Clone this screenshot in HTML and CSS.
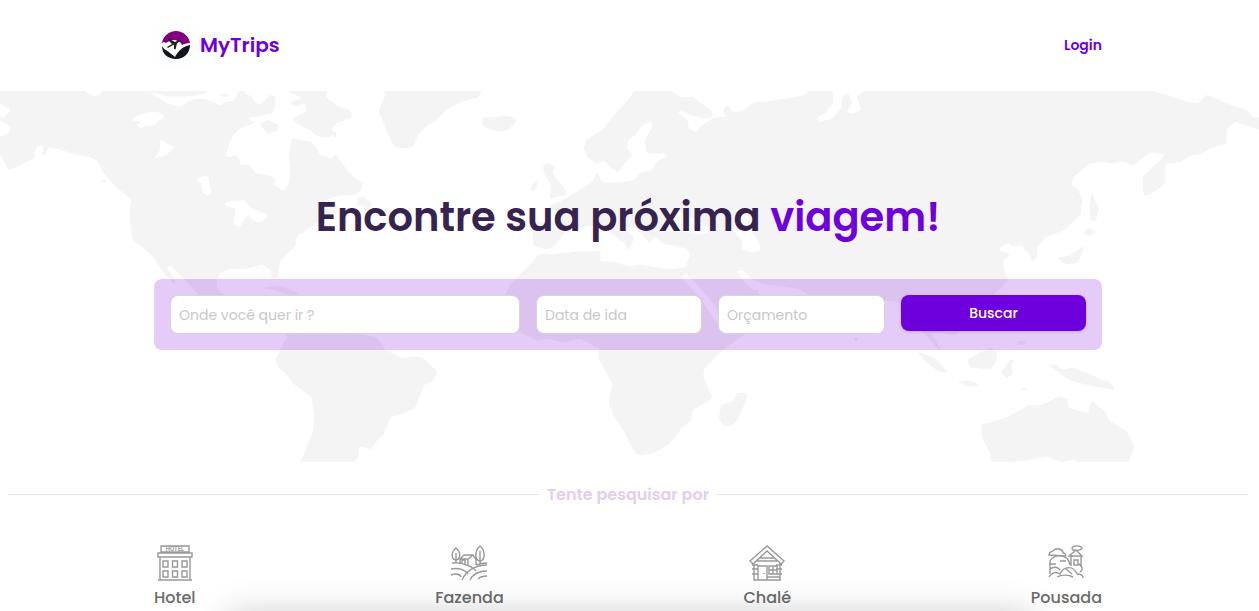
FILE: index.html
```html
<!DOCTYPE html>
<html lang="pt-BR">
<head>
<meta charset="utf-8">
<title>MyTrips</title>
<link rel="stylesheet" href="styles.css">
</head>
<body>
<div class="page">
<header class="header">
  <a class="brand">
    <svg class="logo" viewBox="0 0 44 44">
      <path d="M0 0h44v44H0z" fill="#fdfefe"/>
      <circle cx="22" cy="22" r="14" fill="#fff"/>
      <path d="M8 20C9 13 15 8 22 8s13 5 14 12c-4 0-6 1-8 2l-2-3-5-2-4 0-5 3-2-1z" fill="#800080"/>
      <path d="M8 23c2 4 5 4 8 7l5 4c4-7 7-10 15-12 0 8-6 14-14 14S8 31 8 23z" fill="#15151f"/>
      <path d="M13 24l5-3-4-4 1.500-1 5.500 3 5-2.500.8 1L23 20.500l-1.500 6-1.500-.5v-4.500L14 25z" fill="#222"/>
    </svg>
    <span class="name">MyTrips</span>
  </a>
  <a class="login">Login</a>
</header>
<main>
<section class="hero">
  <svg class="map" viewBox="0 91 1259 371" fill="#f4f4f4" stroke-linejoin="round">
    <filter id="smooth" filterUnits="userSpaceOnUse" x="0" y="91" width="1259" height="371" color-interpolation-filters="sRGB"><feGaussianBlur stdDeviation="1.2"/><feComponentTransfer><feFuncA type="linear" slope="3" intercept="-1"/></feComponentTransfer></filter>
    <g filter="url(#smooth)">
    <g stroke="#f4f4f4" stroke-width="1">
    <path d="M-9 81H83V91L90 95 95 97 100 95 104 91V81H128V91L140 93 152 95 160 99 165 103 172 105 180 107.500 188 102 196 99 205 99.500 214 103 220 106 224 103 234 101 238 94 240 91V81H243V91L247 95 252 97 255 103 260 105 266 100 270 95 275 97 275 105 272 113 262 115 246 118 250 121 256 122 240 128 232 136 227 149 225 156 230 158 236 155 239 160 240 166 248 165 253 170 256 174 270 176 276 180 273 184 280 190 285 191 289 184 291 170 289 155 292 139 305 141 312 143 316 148 319 155 326 157 332 160 335 154 345 168 352 176 362 183 361 190 356 194 340 195 328 198 322 206 332 203 337 206 338 212 317 222 305 231 297 235 295 246 280 260 278 270 277 278 273 278 270 274 272 270 262 264 255 266 245 269 230 268 220 273 216 280 217 290 226 297 290 330V336L230 312 200 296 182 276 172 266 165 265 175 281V285L162 270 153 256 140 245 133 240 131 228 130 210 132 200 128 196 115 186 105 174 97 160 88 156 75 154 60 149 48 146 46 153 41 155 44 150 43 144 37 146 34 152 34 158 20 165 8 170 5 162 2 158 0 150H-9z"/>
    <path d="M128 81V91L145 91.500 160 93 167 96H187L205 93 209 90V81z"/>
    <path d="M288 81V91L303 98 290 103 297 107 305 102 307 112 292 119 300 125 310 130 318 136 330 137 333 132 334 138 337 133 330 130 337 122 345 120 352 117 350 111 338 107 325 97 327 91V81zM260 124L268 120 279 126 277 130 268 134zM358 198L363 197 372 204 370 208 357 204zM383 81V91L386 95 379 111 385 125 392 143 397 147 405 148 413 146 418 134 428 124 436 120 448 108 463 101 478 97 481 91V81zM483 118H494L505 116 511 117 516 121 510 128 502 131 491 129 483 125zM543 166L547 164 554 166 552 174 560 183 565 190V195L550 198 552 188 549 180 545 175zM538 180L536 189 530 191 533 184z"/>
    <path d="M263 288L280 286 300 294H287L273 289zM290 333L283 345 276 360 278 367 285 372 292 382 312 397 315 417 313 433 301 462V472H353V462L358 457 359 445 370 449 377 440 383 435 390 417 403 413 415 407 423 385 433 381 437 372 423 358 415 357 402 359 385 350 377 338 360 334z"/>
    <path d="M635 81V91L630 98 615 115 603 130 587 140 584 148 588 157 597 163 605 160 610 167 618 172 623 165 632 155 627 149V140L635 135 642 125 652 120 653 127 645 140 647 153H663L670 155 657 162 652 171 640 173 635 180 620 183H602L597 172 593 182 577 192 560 202 548 207 558 212 560 223 535 222 533 235 534 245 545 249 553 247 560 238 566 230 580 228 595 224 605 228 615 236 625 243 628 250 634 238 625 230 634 226 643 235 650 243 654 235 663 243 687 248 691 255 685 268 670 270 640 265 630 267 612 262H600V252H577L553 255 540 254 523 272 510 285 506 295 510 320 520 332 537 340 547 338 563 342 580 338 599 348V358L613 385 609 403 615 417 625 432 632 447 638 455 653 453 670 443 682 427 691 420 692 410 712 398 703 378V370L720 352 743 335 752 327 716 324 713 318 700 298 682 279V274H687L700 287 717 308 720 326 745 318 760 300 758 291 752 290 738 275 735 270H744L751 278 765 284 797 288 815 298 840 330 860 302 885 300 900 302 905 315 925 333 932 342 942 352 930 332 945 333 955 335 960 331 970 305 993 295 1008 280 1003 268V260L1010 255 997 250 1008 242 1012 246 1023 245 1025 250 1031 255 1032 262 1037 257 1036 248 1045 237 1063 230 1080 215 1082 200 1077 189 1071 185 1073 177 1090 163 1102 161 1112 163 1123 161 1133 165 1150 152 1167 154 1143 177 1144 195 1150 194 1165 183V163L1180 162 1190 155 1202 153 1210 148 1226 143V130L1235 121 1259 129H1269V118H1252L1247 110 1232 106 1207 95 1198 104 1187 102 1152 91V81H865V91L857 97 862 110 853 114 845 113 852 103 848 93 843 97 842 108 833 118 820 123 816 117 825 113 833 102 832 91V81H808V91L807 95 787 99 767 102 753 103 742 112H732L727 105 723 112 728 117 715 118 700 127 697 133 688 128 687 120 677 113 680 110 692 115 703 118 712 117V112L703 105 692 97 682 98 670 91V81z"/>
    <path d="M738 393L747 394 745 402 737 420 732 425 724 426 719 418 722 405 733 402zM1092 192L1095 202 1099 210 1096 215V221L1091 220 1090 205zM1084 231L1090 229 1096 232 1090 235 1084 234zM1059 258L1070 256 1084 246 1078 262 1066 264 1059 260zM917 352L932 357 940 363 947 373 937 370 927 362zM957 381H970L979 385 968 386zM968 360L980 353 992 348 997 353 995 363 990 369 970 367zM1001 372L1007 365 1010 360 1015 361 1010 365 1013 372 1007 378zM1017 342L1024 341 1026 344 1018 344zM1049 365H1056L1062 370 1073 368 1095 377 1110 383 1115 390 1105 388 1090 385 1070 380zM982 425L1007 418 1028 406H1040L1060 397 1067 399 1068 408 1088 414 1092 402 1105 412 1108 420 1127 432 1134 447 1128 462V472H1078V462L1073 459 1062 462 1047 456 1020 461 992 462 990 452 982 437z"/>
    </g>
    <circle cx="856" cy="339" r="2"/><circle cx="104" cy="181" r="2"/><circle cx="96" cy="170" r="1.500"/><circle cx="1033" cy="361" r="1.500"/><circle cx="1024" cy="389" r="2"/>
    </g>
    <path fill="#fff" stroke="#fff" stroke-width="1" d="M0 105Q10 108 10 111L4 117 0 116zM0 122Q8 122 10 129 10 134 0 136zM132 120Q140 113 155 112 164 114 164 117L157 121 155 125 147 125 140 128 138 125 142 121zM161 140L166 144 175 147 166 155 155 158 160 151zM197 180Q203 175 208 177L211 193Q208 198 203 192 204 184 197 180zM225 203Q235 200 245 201L250 208 267 215Q264 222 258 222 252 221 248 215 243 219 240 226 234 226 234 221 237 215 235 208L225 205zM735 232L743 242 742 248Q750 255 760 250 762 245 750 230L752 222 745 212 735 218zM660 232L668 218 680 212 695 220 715 230 700 234 680 231z"/>
    <path d="M219 95Q225 92 230 96 225 98 219 95z"/>
  </svg>
  <div class="content">
    <h1 class="title">Encontre sua próxima <span class="accent">viagem!</span></h1>
    <form class="search">
      <input class="field" placeholder="Onde você quer ir ?">
      <input class="field" placeholder="Data de ida">
      <input class="field" placeholder="Orçamento">
      <button class="submit" type="button">Buscar</button>
    </form>
  </div>
</section>
<div class="divider"><span class="divider-text">Tente pesquisar por</span></div>
<nav class="types">
  <a class="type"><svg class="icon" viewBox="0 0 36 36"><path d="M4 1h28v6H4zM1 8h34v4H1zM3 12h30v23H3zM1 35h34M6 16h5v6H6zM15.500 16h5v6h-5zM25 16h5v6h-5zM6 26h5v6H6zM15.500 26h5v6h-5zM25 26h5v6h-5z"/><text x="18" y="6" class="sign">HOTEL</text></svg><span>Hotel</span></a>
  <a class="type"><svg class="icon" viewBox="0 0 36 36"><path d="M5 18V8M5 15C0 14 0 7 5 3c5 4 5 11 0 12M29 20V6M29 16c-6-1-5-11 0-15 5 4 6 14 0 15M9 19v-5l4-4h9l3 5v5M9 14h8l5-4M17 14v6M11 19v-4h3v4M1 18c11-1 21 4 24 8M0 24c9-2 15 2 17 5M0 30c6-2 9 0 10 2M11 35c4-9 13-15 25-15M19 35c3-6 9-9 17-9M27 34c2-2 5-3 9-3M25 20c4-2 8-2 11-2"/></svg><span>Fazenda</span></a>
  <a class="type"><svg class="icon" viewBox="0 0 36 36"><path d="M1 16L18 1l17 15-3 3L18 6 4 19zM8 16h20M11 13h14M5 18v17h26V18M3 20h6M27 20h6M3 24h6M27 24h6M3 29h6M27 29h6M5 35h27M9 21h9v14H9zM20 21h8v8h-8zM24 21v8M20 25h8M18 32h13M15 28v1"/></svg><span>Chalé</span></a>
  <a class="type"><svg class="icon" viewBox="0 0 36 36"><path d="M1 10c0-4 4-3 5-5 4-3 9 0 9 3 3 0 3 2 2 3zM2 29V16c2-4 7-6 11-5 5 0 8 4 9 9M1 19h7M12 16h6M2 24c4-3 8-2 10 1M23 21V11h10v11M21 11l7-6 6 6zM26 15h4v5h-4zM24 4c0-4 8-4 10-1 0 2-8 4-10 1M1 32c2-4 7-6 11-3 4-8 13-9 17 0 4 0 6 2 6 4M9 32c5-3 12-2 16 0M31 19c4 2 4 6 1 8M18 24l6 5"/></svg><span>Pousada</span></a>
</nav>
</main>
<div class="panel-peek"></div>
</div>
</body>
</html>
```
FILE: styles.css
```css
* { box-sizing: border-box; }
body {
  margin: 0;
  background: #fff;
  font-family: Poppins, Inter, sans-serif;
}
.page {
  height: 611px;
  overflow: hidden;
  position: relative;
}
.header {
  height: 91px;
  padding: 0 157px 0 154px;
  display: flex;
  align-items: center;
  justify-content: space-between;
  color: #6d00dc;
}
.brand { display: flex; align-items: center; gap: 2px; padding-bottom: 2px; }
.logo { width: 44px; height: 44px; }
.name { font-size: 20px; font-weight: 600; }
.login { font-size: 14px; font-weight: 600; }
.hero { display: grid; height: 371px; }
.map, .content { grid-area: 1 / 1; }
.map { width: 100%; height: 371px; display: block; }
.content { padding: 94px 157px 0 154px; z-index: 1; }
.title {
  margin: 0;
  height: 64px;
  line-height: 64px;
  font-size: 40px;
  font-weight: 600;
  text-align: center;
  white-space: nowrap;
  color: #37234f;
}
.accent { color: #6d00dc; }
.search {
  margin-top: 30px;
  height: 71px;
  padding: 16px;
  display: grid;
  grid-template-columns: 350px 166px 167px 185px;
  gap: 16px;
  align-items: start;
  border-radius: 8px;
  background: rgba(121, 0, 221, 0.205);
}
.field {
  width: 100%;
  height: 39px;
  padding: 2px 8px 0;
  border: 1px solid #d0d7de;
  border-radius: 8px;
  background: #fff;
  font: 400 14px Poppins, Inter, sans-serif;
}
.field::placeholder { color: #c8c8c8; opacity: 1; }
.submit {
  height: 36px;
  border: 0;
  border-radius: 8px;
  background: #6d00dc;
  color: #fff;
  font: 500 14px Poppins, Inter, sans-serif;
  box-shadow: 0 1px 3px rgba(0, 0, 0, 0.15);
}
.divider {
  margin: 20px 11px 0 8px;
  height: 25px;
  display: flex;
  align-items: center;
  gap: 8px;
}
.divider::before, .divider::after { content: ""; flex: 1; height: 1px; background: #e5e5e5; }
.divider-text { font-size: 16px; font-weight: 600; color: #e0d0ee; }
.types {
  margin-top: 39px;
  padding: 0 157px 0 154px;
  display: flex;
  justify-content: space-between;
  color: #6b6b6b;
}
.type { display: flex; flex-direction: column; align-items: center; font-size: 16px; font-weight: 500; line-height: 32px; }
.icon { width: 36px; height: 36px; margin-top: -1px; margin-bottom: 1px; fill: none; stroke: #999; stroke-width: 1.4; }
.sign { font: 700 5.5px Inter, sans-serif; fill: #999; stroke: none; text-anchor: middle; }
.panel-peek {
  position: absolute;
  left: 180px;
  bottom: 0;
  width: 900px;
  height: 50px;
  overflow: hidden;
  display: flex;
  flex-direction: column;
  pointer-events: none;
}
.panel-peek::after {
  content: "";
  flex: none;
  width: 800px;
  height: 40px;
  margin: 56px auto 0;
  box-shadow: 0 0 36px rgba(0, 0, 0, 0.25);
}
```
